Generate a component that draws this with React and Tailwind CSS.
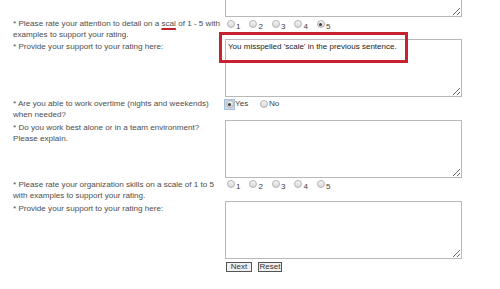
import React from "react";

function Radio({ checked, focus }) {
  return (
    <span
      className={
        "inline-flex items-center justify-center w-[9px] h-[9px] shrink-0 " +
        (focus ? "bg-[#cdd9e6] outline outline-1 outline-[#a9bfd6]" : "")
      }
    >
      <span className="flex items-center justify-center w-[8px] h-[8px] rounded-full border border-[#b3b3b3] bg-gradient-to-b from-[#f6f6f6] to-[#d8d8d8]">
        {checked && <span className="block w-[3px] h-[3px] rounded-full bg-[#3a3a3a]" />}
      </span>
    </span>
  );
}

function Scale({ checked }) {
  return (
    <div className="flex items-end pl-[1px]">
      {[1, 2, 3, 4, 5].map((n) => (
        <span key={n} className="flex items-end w-[22.5px] shrink-0">
          <Radio checked={checked === n} />
          <span className="ml-[1px] leading-[9px] translate-y-[2px] text-[#444]">{n}</span>
        </span>
      ))}
    </div>
  );
}

function Area({ children, className = "" }) {
  return (
    <textarea
      readOnly
      value={children || ""}
      className={
        "block w-[237px] h-[58px] border border-[#b9b9b9] bg-white px-[2px] py-[1px] text-[8px] leading-[11px] text-[#222] font-['Liberation_Sans',Arial,sans-serif] outline-none " +
        className
      }
    />
  );
}

export default function App() {
  return (
    <div className="relative w-[500px] h-[289px] overflow-hidden bg-white font-['Liberation_Sans',Arial,sans-serif] text-[8.1px] leading-[11.5px] text-[#4d4d4d]">
      <div className="pl-[13px]">
        <div className="flex">
          <div className="w-[212px] shrink-0" />
          <Area className="-mt-[41px]" />
        </div>

        <div className="flex h-[22px] pt-[0.5px]">
          <div className="w-[212px] shrink-0">
            * Please rate your attention to detail on a{" "}
            <span className="underline decoration-[#c0202a] decoration-2 underline-offset-[2px]">scal</span> of 1 - 5 with
            <br />
            examples to support your rating.
          </div>
          <div className="pt-[2px]">
            <Scale checked={5} />
          </div>
        </div>

        <div className="flex">
          <div className="w-[212px] shrink-0 pt-[2px]">* Provide your support to your rating here:</div>
          <Area>You misspelled 'scale' in the previous sentence.</Area>
        </div>

        <div className="flex h-[23px] pt-[0.5px]">
          <div className="w-[212px] shrink-0">
            * Are you able to work overtime (nights and weekends)
            <br />
            when needed?
          </div>
          <div className="flex items-center h-[11px] mt-[1px] text-[#444]">
            <Radio checked focus />
            <span className="ml-[1px] w-[24px]">Yes</span>
            <Radio />
            <span className="ml-[1px]">No</span>
          </div>
        </div>

        <div className="flex">
          <div className="w-[212px] shrink-0 pt-[1.5px]">
            * Do you work best alone or in a team environment?
            <br />
            Please explain.
          </div>
          <Area />
        </div>

        <div className="flex h-[23px] pt-[0.5px]">
          <div className="w-[212px] shrink-0">
            * Please rate your organization skills on a scale of 1 to 5
            <br />
            with examples to support your rating.
          </div>
          <div className="pt-[1px]">
            <Scale />
          </div>
        </div>

        <div className="flex">
          <div className="w-[212px] shrink-0 pt-[1.5px]">* Provide your support to your rating here:</div>
          <Area />
        </div>

        <div className="flex mt-[3px] pl-[213px] gap-[6px]">
          <button className="h-[10px] w-[26px] border border-[#555] bg-[#f0f0f0] text-[8px] leading-[8px] text-[#333] font-['Liberation_Sans',Arial,sans-serif] p-0">
            Next
          </button>
          <button className="h-[10px] w-[24px] border border-[#555] bg-[#f0f0f0] text-[8px] leading-[8px] text-[#333] font-['Liberation_Sans',Arial,sans-serif] p-0">
            Reset
          </button>
        </div>
      </div>

      <div className="absolute left-[219px] top-[32px] w-[189px] h-[31px] border-[3px] border-[#c4232f] pointer-events-none" />
    </div>
  );
}
